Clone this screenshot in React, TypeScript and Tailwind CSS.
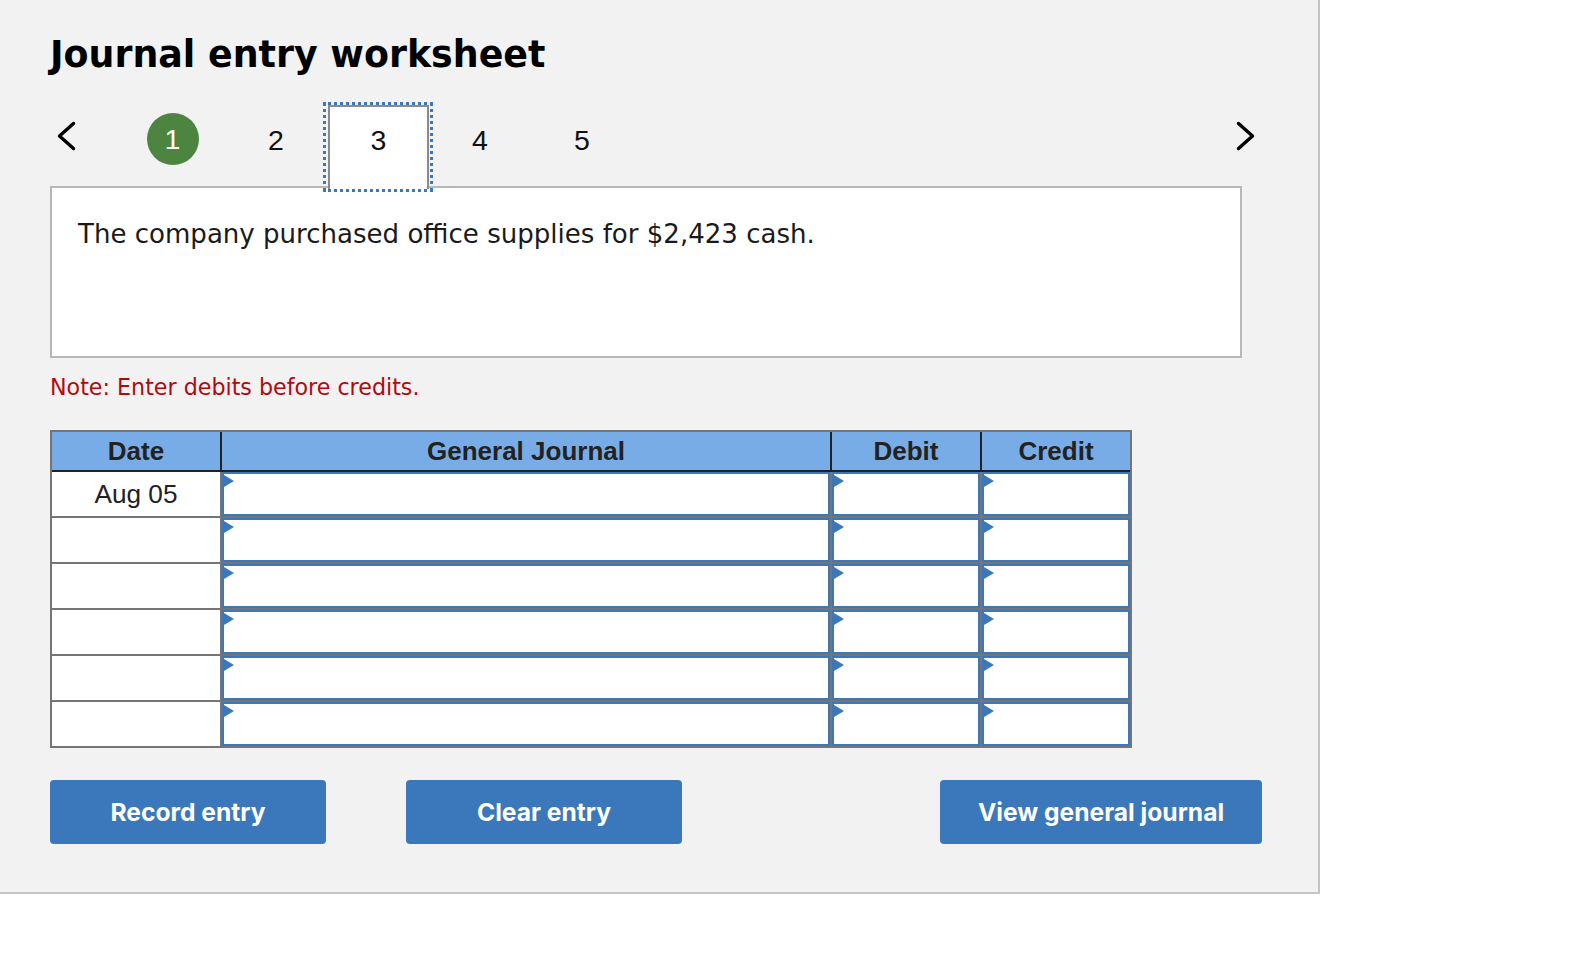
import React from 'react';

const dejavu = 'font-["DejaVu_Sans",Verdana,sans-serif]';
const rows = ['Aug 05', '', '', '', '', ''];

function Chevron({ points }: { points: string }) {
  return (
    <svg width="20" height="30" viewBox="0 0 20 30" fill="none" className="shrink-0">
      <polyline points={points} stroke="#000" strokeWidth="3.4" strokeLinecap="round" strokeLinejoin="round" />
    </svg>
  );
}

function Step({ n }: { n: number }) {
  return <div className="w-[102px] pt-[20px] text-center text-[28.5px] leading-[34px] text-[#111]">{n}</div>;
}

function InputCell({ width }: { width: string }) {
  return (
    <div className={`${width} relative border-l-2 border-[#757575]`}>
      <div className="h-full border-2 border-[#3b78bb] bg-white" />
      <div className="absolute left-[2px] top-[3px] h-0 w-0 border-y-[6.5px] border-l-[10px] border-y-transparent border-l-[#3b78bb]" />
    </div>
  );
}

function ActionButton({ label, width }: { label: string; width: string }) {
  return (
    <button className={`${width} h-[64px] rounded-[4px] bg-[#3b78bb] text-center font-["Inter",sans-serif] text-[24.6px] font-bold text-white`}>
      {label}
    </button>
  );
}

export default function App() {
  return (
    <div className="h-[956px] w-[1588px] overflow-hidden bg-white">
      <div className="h-[894px] w-[1320px] border-r-2 border-b-2 border-[#c4c4c4] bg-[#f2f2f2] pl-[50px] pt-[31px]">
        <h1 className={`${dejavu} text-[36.4px] leading-[48px] font-bold text-black`}>Journal entry worksheet</h1>

        <div className="relative z-10 mt-[24px] flex h-[83px] w-[1206px] items-start">
          <div className="ml-[7px] mt-[18px]">
            <Chevron points="16.5,2.5 2.5,15 16.5,27.5" />
          </div>
          <div className="ml-[70px] mt-[10px] flex h-[52px] w-[52px] items-center justify-center rounded-full bg-[#4d8540] pr-[1px] font-['Liberation_Sans',sans-serif] text-[28.5px] text-white">
            1
          </div>
          <div className="ml-[26px] flex font-['Liberation_Sans',sans-serif]">
            <Step n={2} />
            <div className="ml-[-4px] mr-[-4px] mt-[-1px] h-[90px] w-[110px] border-[3px] border-dotted border-[#3b78bb]">
              <div className="mx-[2px] h-full w-[101px] border-x-2 border-t-2 border-[#8a8a8a] bg-white pt-[16px] text-center text-[28.5px] leading-[34px] text-[#111]">
                3
              </div>
            </div>
            <Step n={4} />
            <Step n={5} />
          </div>
          <div className="ml-auto mt-[18px]">
            <Chevron points="2.5,2.5 16.5,15 2.5,27.5" />
          </div>
        </div>

        <div className={`${dejavu} h-[172px] w-[1192px] border-2 border-[#b8b8b8] bg-white pl-[26px] pt-[28px] text-[26.05px] leading-[36px] text-[#1a1a1a]`}>
          The company purchased office supplies for $2,423 cash.
        </div>

        <p className={`${dejavu} mt-[14px] text-[22.2px] leading-[30px] text-[#b00a0f]`}>Note: Enter debits before credits.</p>

        <div className="mt-[28px] w-[1082px] border-2 border-[#757575] font-['Liberation_Sans',sans-serif]">
          <div className="flex h-[40px] border-b-2 border-[#222] bg-[#78ace6] text-center text-[26px] leading-[38px] font-bold text-[#222]">
            <div className="w-[168px]">Date</div>
            <div className="w-[610px] border-l-2 border-[#222]">General Journal</div>
            <div className="w-[150px] border-l-2 border-[#222]">Debit</div>
            <div className="w-[150px] border-l-2 border-[#222]">Credit</div>
          </div>
          <div>
            {rows.map((date, i) => (
              <div key={i} className={`flex bg-white ${i > 0 ? 'h-[46px] border-t-2 border-[#757575]' : 'h-[44px]'}`}>
                <div className="w-[168px] pt-[5px] text-center text-[26.2px] leading-[35px] text-[#222]">{date}</div>
                <InputCell width="w-[610px]" />
                <InputCell width="w-[150px]" />
                <InputCell width="w-[150px]" />
              </div>
            ))}
          </div>
        </div>

        <div className="mt-[32px] flex w-[1212px]">
          <ActionButton label="Record entry" width="w-[276px]" />
          <div className="ml-[80px]">
            <ActionButton label="Clear entry" width="w-[276px]" />
          </div>
          <div className="ml-auto">
            <ActionButton label="View general journal" width="w-[322px]" />
          </div>
        </div>
      </div>
    </div>
  );
}
